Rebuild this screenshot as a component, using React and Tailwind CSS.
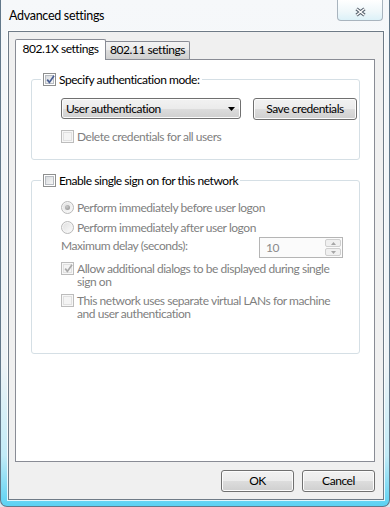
import React from 'react';

const btnFace =
  'rounded-[3px] border border-[#707070] bg-[linear-gradient(to_bottom,#f2f2f2_0%,#ebebeb_50%,#dddddd_50%,#cfcfcf_100%)] shadow-[inset_0_0_0_1px_#fcfcfc]';

const Button = ({ children, width }) => (
  <div className={`flex h-[22px] items-center justify-center whitespace-nowrap text-black ${btnFace} ${width}`}>
    {children}
  </div>
);

const CheckBox = ({ checked, disabled }) => (
  <span
    className={`relative flex h-[13px] w-[13px] shrink-0 items-center justify-center border ${
      disabled ? 'border-[#bcbcbc] bg-[#f7f7f7]' : 'border-[#8e8f8f] bg-white'
    }`}
  >
    <span
      className={`h-[9px] w-[9px] border ${
        disabled
          ? 'border-[#e0e0e0] bg-[#f4f4f4]'
          : 'border-[#b8bcc2] bg-[linear-gradient(135deg,#d9dcdf_0%,#f6f6f6_100%)]'
      }`}
    />
    {checked && (
      <svg className="absolute left-[1px] top-[0px]" width="11" height="11" viewBox="0 0 11 11">
        <path
          d="M2.2 5.6 L4.4 8.4 L9 1.8"
          fill="none"
          stroke={disabled ? '#a9a9a9' : '#4a5f94'}
          strokeWidth="1.7"
        />
      </svg>
    )}
  </span>
);

const Radio = ({ checked }) => (
  <span className="flex h-[13px] w-[13px] shrink-0 items-center justify-center rounded-full border border-[#b9b9b9] bg-[#f5f5f5]">
    <span className="flex h-[9px] w-[9px] items-center justify-center rounded-full bg-[linear-gradient(135deg,#e1e1e1_0%,#fafafa_100%)]">
      {checked && (
        <span className="h-[5px] w-[5px] rounded-full bg-[radial-gradient(circle_at_40%_35%,#c9c9c9_0%,#8d8d8d_100%)]" />
      )}
    </span>
  </span>
);

const OptionRow = ({ control, children, className = '' }) => (
  <div className={`flex items-start gap-[3px] pl-[29px] leading-[13px] ${className}`}>
    {control}
    <span className="whitespace-nowrap text-[#7f7f7f]">{children}</span>
  </div>
);

const SpinBox = () => (
  <div className="flex h-[21px] w-[84px] items-center justify-between border border-[#b5b5b5] bg-[#fbfbfb] pl-[6px] pr-[1px]">
    <span className="text-[#8a8a8a]">10</span>
    <div className="flex flex-col gap-[1px]">
      <span className="flex h-[8px] w-[16px] items-center justify-center rounded-[2px] border border-[#cfcfcf] bg-[#f0f0f0]">
        <svg width="5" height="3" viewBox="0 0 5 3">
          <path d="M0 3 L2.5 0 L5 3 Z" fill="#a6a6a6" />
        </svg>
      </span>
      <span className="flex h-[8px] w-[16px] items-center justify-center rounded-[2px] border border-[#cfcfcf] bg-[#f0f0f0]">
        <svg width="5" height="3" viewBox="0 0 5 3">
          <path d="M0 0 L2.5 3 L5 0 Z" fill="#a6a6a6" />
        </svg>
      </span>
    </div>
  </div>
);

export default function App() {
  return (
    <div className="h-[507px] w-[390px] overflow-hidden bg-[#dfe7ee]">
      <div className="flex h-[507px] flex-col rounded-b-[7px] border-x border-b border-[#62788a] bg-[linear-gradient(to_bottom,#f6f8fa_0%,#eef3f6_72%,#c2ebf7_90%,#5bd2f3_100%)] font-['Lato',sans-serif] text-[12px] tracking-[-0.45px] text-black">
        {/* Title bar */}
        <div className="flex h-[31px] items-start justify-between">
          <span className="ml-[8px] mt-[8px] whitespace-nowrap text-[12.5px] leading-[16px] tracking-[-0.3px]">Advanced settings</span>
          <div className="mr-[6px] flex h-[21px] w-[46px] items-start justify-center rounded-b-[4px] border border-t-0 border-[#a9b4be] bg-[linear-gradient(to_bottom,#ffffff_0%,#eef7fa_60%,#dcf1f8_100%)] pt-[7px]">
            <svg width="13" height="10" viewBox="0 0 13 10">
              <path d="M2.5 1.8 L10.5 8.2 M10.5 1.8 L2.5 8.2" stroke="#56616d" strokeWidth="3.4" />
              <path d="M2.5 1.8 L10.5 8.2 M10.5 1.8 L2.5 8.2" stroke="#ffffff" strokeWidth="1.4" />
            </svg>
          </div>
        </div>

        {/* Client area */}
        <div className="ml-[7px] h-[469px] w-[376px] border border-[#6f7b87] bg-[#f0f0f0] shadow-[0_0_0_1px_rgba(255,255,255,0.8)]">
          <div className="ml-[6px] mt-[7px] flex items-end">
            <div className="relative z-10 -mb-px flex h-[21px] w-[91px] items-start justify-center whitespace-nowrap rounded-t-[2px] border border-b-0 border-[#898c95] bg-white pt-[1px] leading-[16px]">
              802.1X settings
            </div>
            <div className="flex h-[18px] w-[84px] items-start justify-center whitespace-nowrap rounded-tr-[2px] border border-b-0 border-l-0 border-[#898c95] bg-[linear-gradient(to_bottom,#f3f3f3_0%,#ebebeb_50%,#dddddd_50%,#cfcfcf_100%)] leading-[16px]">
              802.11 settings
            </div>
          </div>

          <div className="ml-[6px] h-[403px] w-[360px] border border-[#898c95] bg-white">
            <fieldset className="ml-[15px] mt-[12px] h-[88px] w-[329px] rounded-[3px] border border-[#d5dfe5]">
              <legend className="ml-[9px] px-[2px]">
                <span className="flex items-center gap-[3px] whitespace-nowrap leading-[15px]">
                  <CheckBox checked />
                  Specify authentication mode:
                </span>
              </legend>
              <div className="mt-[11px] flex items-start pl-[29px]">
                <div className={`flex h-[21px] w-[180px] items-center justify-between pl-[4px] pr-[5px] ${btnFace}`}>
                  <span className="whitespace-nowrap">User authentication</span>
                  <svg width="7" height="4" viewBox="0 0 7 4">
                    <path d="M0 0 L7 0 L3.5 4 Z" fill="#000" />
                  </svg>
                </div>
                <div className="ml-[12px]">
                  <Button width="w-[104px]">Save credentials</Button>
                </div>
              </div>
              <OptionRow className="mt-[10px]" control={<CheckBox disabled />}>
                Delete credentials for all users
              </OptionRow>
            </fieldset>

            <fieldset className="ml-[15px] mt-[13px] h-[181px] w-[329px] rounded-[3px] border border-[#d5dfe5]">
              <legend className="ml-[9px] px-[2px]">
                <span className="flex items-center gap-[3px] whitespace-nowrap leading-[15px]">
                  <CheckBox />
                  Enable single sign on for this network
                </span>
              </legend>
              <OptionRow className="mt-[13px]" control={<Radio checked />}>
                Perform immediately before user logon
              </OptionRow>
              <OptionRow className="mt-[7px]" control={<Radio />}>
                Perform immediately after user logon
              </OptionRow>
              <div className="mt-[3px] flex items-start pl-[29px]">
                <span className="w-[198px] whitespace-nowrap pt-[2px] leading-[13px] text-[#7f7f7f]">
                  Maximum delay (seconds):
                </span>
                <SpinBox />
              </div>
              <OptionRow className="mt-[4px]" control={<CheckBox checked disabled />}>
                Allow additional dialogs to be displayed during single
                <br />
                sign on
              </OptionRow>
              <OptionRow className="mt-[6px]" control={<CheckBox disabled />}>
                This network uses separate virtual LANs for machine
                <br />
                and user authentication
              </OptionRow>
            </fieldset>
          </div>

          <div className="mt-[8px] flex justify-end gap-[8px] pr-[8px]">
            <Button width="w-[73px]">OK</Button>
            <Button width="w-[73px]">Cancel</Button>
          </div>
        </div>
      </div>
    </div>
  );
}
